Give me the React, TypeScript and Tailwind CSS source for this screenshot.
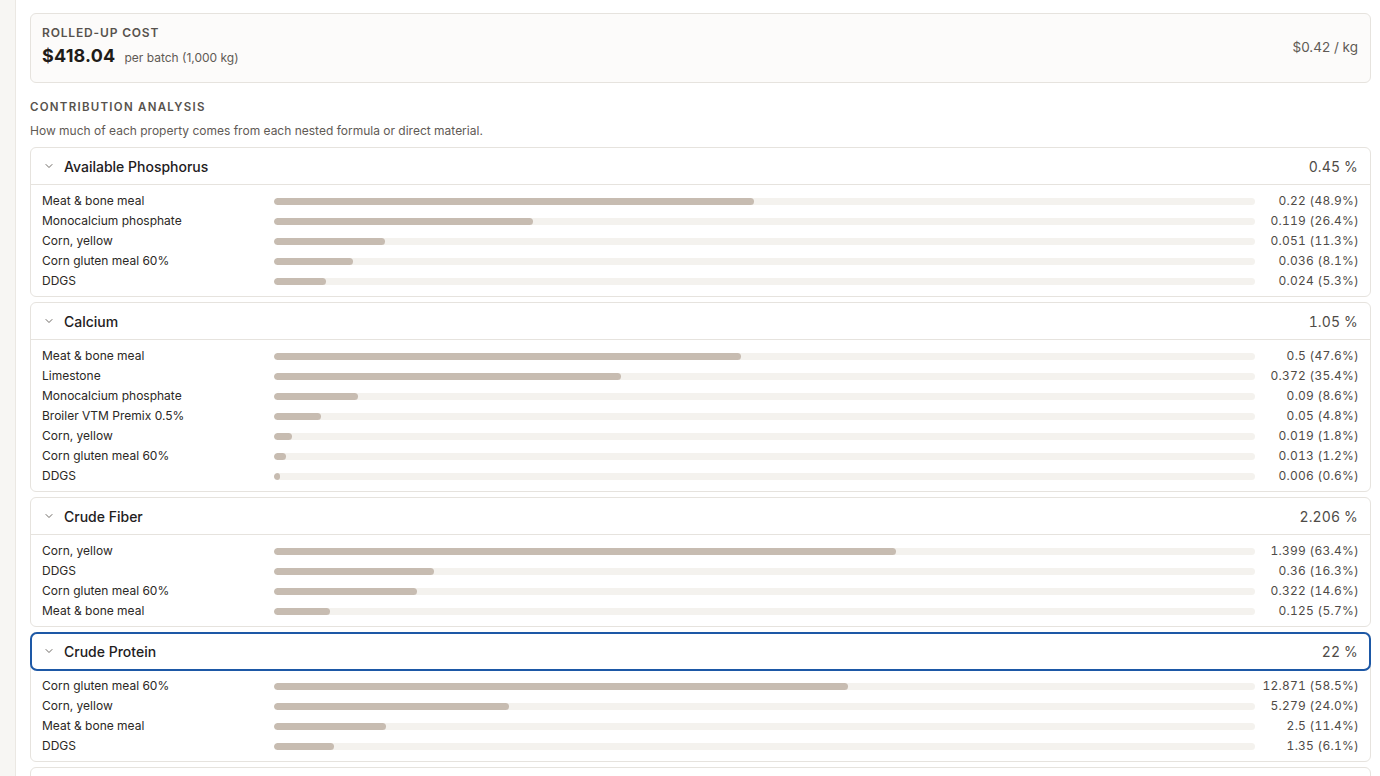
import { ChevronDown } from 'lucide-react';

type Part = { name: string; value: string; pct: number };
type Property = { name: string; total: string; parts: Part[]; focused?: boolean };

const properties: Property[] = [
  {
    name: 'Available Phosphorus',
    total: '0.45 %',
    parts: [
      { name: 'Meat & bone meal', value: '0.22', pct: 48.9 },
      { name: 'Monocalcium phosphate', value: '0.119', pct: 26.4 },
      { name: 'Corn, yellow', value: '0.051', pct: 11.3 },
      { name: 'Corn gluten meal 60%', value: '0.036', pct: 8.1 },
      { name: 'DDGS', value: '0.024', pct: 5.3 },
    ],
  },
  {
    name: 'Calcium',
    total: '1.05 %',
    parts: [
      { name: 'Meat & bone meal', value: '0.5', pct: 47.6 },
      { name: 'Limestone', value: '0.372', pct: 35.4 },
      { name: 'Monocalcium phosphate', value: '0.09', pct: 8.6 },
      { name: 'Broiler VTM Premix 0.5%', value: '0.05', pct: 4.8 },
      { name: 'Corn, yellow', value: '0.019', pct: 1.8 },
      { name: 'Corn gluten meal 60%', value: '0.013', pct: 1.2 },
      { name: 'DDGS', value: '0.006', pct: 0.6 },
    ],
  },
  {
    name: 'Crude Fiber',
    total: '2.206 %',
    parts: [
      { name: 'Corn, yellow', value: '1.399', pct: 63.4 },
      { name: 'DDGS', value: '0.36', pct: 16.3 },
      { name: 'Corn gluten meal 60%', value: '0.322', pct: 14.6 },
      { name: 'Meat & bone meal', value: '0.125', pct: 5.7 },
    ],
  },
  {
    name: 'Crude Protein',
    total: '22 %',
    focused: true,
    parts: [
      { name: 'Corn gluten meal 60%', value: '12.871', pct: 58.5 },
      { name: 'Corn, yellow', value: '5.279', pct: 24.0 },
      { name: 'Meat & bone meal', value: '2.5', pct: 11.4 },
      { name: 'DDGS', value: '1.35', pct: 6.1 },
    ],
  },
];

function PropertyCard({ p }: { p: Property }) {
  return (
    <section className="border border-[#e6e3de] rounded-md bg-white">
      <button
        className={
          'w-full h-[37px] flex items-center gap-[9px] px-3 border-b border-[#e6e3de] rounded-t-md ' +
          (p.focused ? 'outline-2 outline-[#1d58a6] rounded-md -outline-offset-1' : '')
        }
      >
        <ChevronDown className="w-3 h-3 text-[#5f5a55]" strokeWidth={1.8} />
        <span className="text-[14px] font-medium text-[#23201d]">{p.name}</span>
        <span className="flex-1" />
        <span className="text-[14px] text-[#4f4b47] tabular-nums tracking-[0.01em]">{p.total}</span>
      </button>
      <div className="pt-[6px] pb-[5px] px-[11px]">
        {p.parts.map(part => (
          <div key={part.name} className="grid grid-cols-[232px_1fr_104px] items-center h-5">
            <span className="text-[12px] text-[#2b2825] truncate">{part.name}</span>
            <div className="h-[7px] rounded-full bg-[#f4f2ee] overflow-hidden">
              <div className="h-full rounded-full bg-[#c7bcb1]" style={{ width: `${part.pct}%` }} />
            </div>
            <span className="text-[12px] text-[#4f4b47] text-right tabular-nums tracking-[0.02em]">
              {part.value} ({part.pct.toFixed(1)}%)
            </span>
          </div>
        ))}
      </div>
    </section>
  );
}

export default function App() {
  return (
    <div className="h-[776px] w-[1380px] flex overflow-hidden bg-white font-['Inter',sans-serif] text-[#23201d]">
      <div className="w-4 shrink-0 bg-[#f7f6f3] border-r border-[#ebe8e3]" />
      <main className="flex-1 min-w-0 pt-[13px] pl-[14px] pr-[9px]">
        {/* Cost summary */}
        <div className="border border-[#e6e3de] rounded-md bg-[#fcfbfa] pl-[11px] pr-3 pt-[11px] pb-[12px] flex items-center">
          <div>
            <div className="text-[12px] leading-4 font-semibold tracking-[0.07em] text-[#57524d]">ROLLED-UP COST</div>
            <div className="mt-[3px] flex items-baseline gap-[9px] leading-6">
              <span className="text-[18px] font-bold text-[#1f1c19] tracking-[0.01em]">$418.04</span>
              <span className="text-[12px] text-[#5f5a55]">per batch (1,000 kg)</span>
            </div>
          </div>
          <span className="flex-1" />
          <span className="text-[13.5px] text-[#5f5a55]">$0.42 / kg</span>
        </div>

        <h2 className="mt-4 text-[11.5px] leading-4 font-semibold tracking-[0.11em] text-[#57524d]">
          CONTRIBUTION ANALYSIS
        </h2>
        <p className="mt-2 text-[12px] leading-4 text-[#5f5a55]">
          How much of each property comes from each nested formula or direct material.
        </p>

        <div className="mt-[8px] flex flex-col gap-[5px]">
          {properties.map(p => (
            <PropertyCard key={p.name} p={p} />
          ))}
          {/* next property, collapsed below the fold */}
          <section className="border border-[#e6e3de] rounded-md bg-white h-[37px]" />
        </div>
      </main>
    </div>
  );
}
